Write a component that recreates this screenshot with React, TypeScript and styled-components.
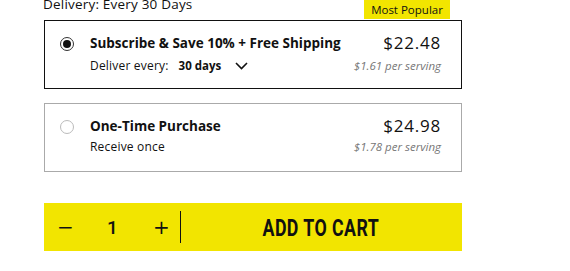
import React from "react";
import styled, { createGlobalStyle } from "styled-components";

const Global = createGlobalStyle`
  html, body { margin: 0; padding: 0; background: #fff; }
  body { font-family: "Open Sans", "Noto Sans", sans-serif; color: #111; }
`;

const Wrapper = styled.div`
  width: 418px;
  margin-left: 44px;
  display: flex;
  flex-direction: column;
`;

const Header = styled.div`
  height: 19px;
  margin-bottom: 1px;
  display: flex;
  justify-content: space-between;
  align-items: flex-start;
`;

const Label = styled.div`
  font-size: 13.5px;
  letter-spacing: 0.2px;
  line-height: 13px;
  margin-top: -2px;
  margin-left: -1px;
`;

const Badge = styled.div`
  background: #f2e500;
  height: 19px;
  width: 86px;
  margin-right: 12px;
  font-size: 11.5px;
  display: flex;
  align-items: center;
  justify-content: center;
  color: #111;
`;

const Option = styled.div<{ $selected?: boolean }>`
  box-sizing: border-box;
  height: 69px;
  border: 1px solid ${(p) => (p.$selected ? "#111" : "#aaa")};
  display: grid;
  grid-template-columns: 14px minmax(0, 1fr) auto;
  grid-template-rows: auto auto;
  align-content: start;
  column-gap: 16px;
  padding: 12px 20px 0 15px;
  margin-bottom: ${(p) => (p.$selected ? "14px" : "31px")};
`;

const Radio = styled.div<{ $selected?: boolean }>`
  box-sizing: border-box;
  width: 14px;
  height: 14px;
  margin-top: 4px;
  border-radius: 50%;
  border: 1px solid ${(p) => (p.$selected ? "#333" : "#bbb")};
  display: flex;
  align-items: center;
  justify-content: center;
  &::after {
    content: "";
    display: ${(p) => (p.$selected ? "block" : "none")};
    width: 8px;
    height: 8px;
    border-radius: 50%;
    background: #111;
  }
`;

const Title = styled.div`
  font-size: 13.5px;
  font-weight: 700;
  line-height: 20px;
  white-space: nowrap;
`;

const Price = styled.div`
  font-size: 17px;
  letter-spacing: 0.8px;
  line-height: 20px;
  text-align: right;
  white-space: nowrap;
`;

const Sub = styled.div<{ $gap: number }>`
  grid-column: 2;
  font-size: 12px;
  letter-spacing: 0.2px;
  line-height: 16px;
  margin-top: ${(p) => p.$gap}px;
  display: flex;
  align-items: center;
  white-space: nowrap;
`;

const Days = styled.span`
  font-weight: 700;
  font-size: 11.5px;
  letter-spacing: 0;
  margin-left: 10px;
`;

const Chevron = styled.svg`
  margin-left: 14px;
  width: 13px;
  height: 8px;
`;

const PerServing = styled.div<{ $gap: number }>`
  font-size: 11.5px;
  font-style: italic;
  color: #777;
  line-height: 16px;
  margin-top: ${(p) => p.$gap}px;
  text-align: right;
  white-space: nowrap;
`;

const CartBar = styled.div`
  height: 48px;
  background: #f2e500;
  display: flex;
  align-items: center;
`;

const Qty = styled.div`
  width: 137px;
  height: 32px;
  border-right: 1px solid #111;
  display: flex;
  align-items: center;
  justify-content: space-between;
  padding: 0 0 0 13px;
  box-sizing: border-box;
`;

const QtyBtn = styled.span`
  font-size: 20px;
  width: 13px;
  text-align: center;
  font-family: "DejaVu Sans", sans-serif;
  &:last-child {
    margin-right: 14px;
  }
`;

const QtyNum = styled.span`
  font-size: 19px;
  font-weight: 500;
  font-family: Roboto, sans-serif;
  margin-left: 2px;
`;

const AddBtn = styled.div`
  flex: 1;
  display: flex;
  justify-content: center;
  margin-left: -2px;
  padding-top: 1px;
`;

const AddText = styled.span`
  display: inline-block;
  font-family: Roboto, sans-serif;
  font-weight: 700;
  font-size: 24px;
  letter-spacing: 0.6px;
  transform: scaleX(0.74);
`;

export default function App() {
  return (
    <>
      <Global />
      <Wrapper>
        <Header>
          <Label>Delivery: Every 30 Days</Label>
          <Badge>Most Popular</Badge>
        </Header>
        <Option $selected>
          <Radio $selected />
          <Title>Subscribe &amp; Save 10% + Free Shipping</Title>
          <Price>$22.48</Price>
          <Sub $gap={5}>
            Deliver every:
            <Days>30 days</Days>
            <Chevron viewBox="0 0 13 8">
              <path d="M1 1 L6.5 6.5 L12 1" fill="none" stroke="#111" strokeWidth="1.6" />
            </Chevron>
          </Sub>
          <PerServing $gap={5}>$1.61 per serving</PerServing>
        </Option>
        <Option>
          <Radio />
          <Title>One-Time Purchase</Title>
          <Price>$24.98</Price>
          <Sub $gap={3}>Receive once</Sub>
          <PerServing $gap={3}>$1.78 per serving</PerServing>
        </Option>
        <CartBar>
          <Qty>
            <QtyBtn>−</QtyBtn>
            <QtyNum>1</QtyNum>
            <QtyBtn>+</QtyBtn>
          </Qty>
          <AddBtn>
            <AddText>ADD TO CART</AddText>
          </AddBtn>
        </CartBar>
      </Wrapper>
    </>
  );
}
